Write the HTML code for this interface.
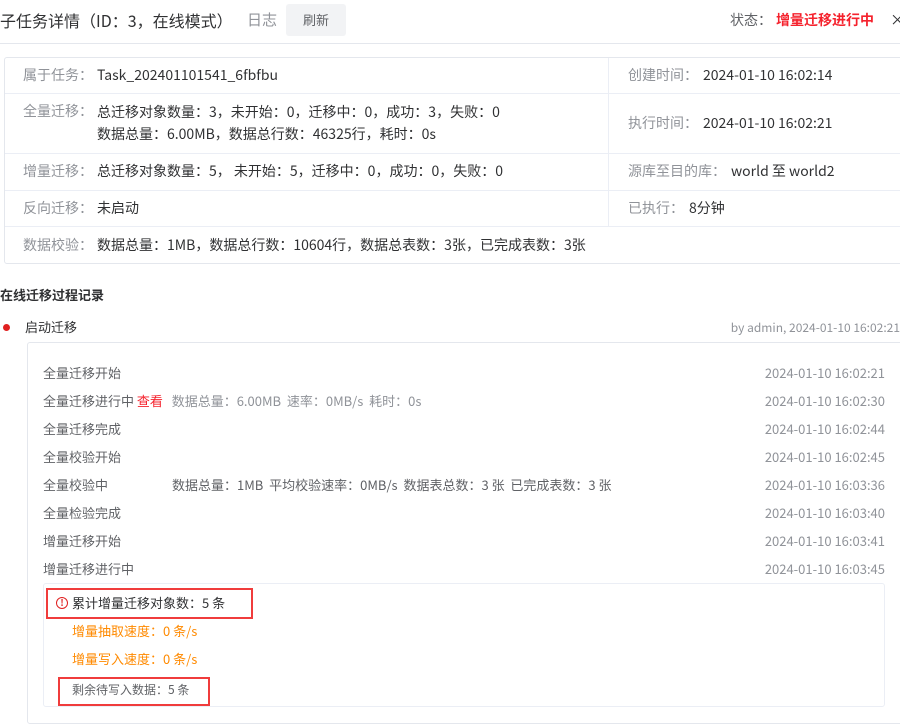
<!DOCTYPE html>
<html><head><meta charset="utf-8"><style>
*{margin:0;padding:0;box-sizing:border-box}
body{width:900px;height:725px;overflow:hidden;background:#fff;font-family:"Noto Sans CJK SC","Liberation Sans",sans-serif;color:#303133;position:relative}
.a{position:absolute;white-space:nowrap;line-height:20px}
.g{color:#909399}
.l{font-size:14px}
.hl{position:absolute;height:1px;background:#ebeef5}
.s{font-size:13px;color:#606266}
.d{font-size:13px;color:#909399;right:15px}
.o{color:#ff8a00;font-size:13px}
</style></head><body>
<div class="a" style="left:0;top:9px;font-size:16px;line-height:22px;color:#303133">子任务详情（ID：3，在线模式）</div>
<div class="a g" style="left:247px;top:10px;font-size:15px">日志</div>
<div class="a" style="left:286px;top:4px;width:60px;height:32px;background:#f2f3f5;border-radius:3px;font-size:13px;line-height:32px;text-align:center;color:#606266">刷新</div>
<div class="a" style="left:730px;top:10px;font-size:14px;color:#606266">状态：</div>
<div class="a" style="left:776px;top:10px;font-size:14px;color:#f5222d;font-weight:bold">增量迁移进行中</div>
<div class="a" style="left:890px;top:10px;font-size:15px;color:#303133">×</div>
<div class="hl" style="left:0;top:43px;width:900px;background:#e4e7ed"></div>

<div class="a" style="left:4px;top:57px;width:900px;height:207px;border:1px solid #e4e7ed;border-radius:3px"></div>
<div class="hl" style="left:5px;top:93px;width:895px"></div>
<div class="hl" style="left:5px;top:153px;width:895px"></div>
<div class="hl" style="left:5px;top:190px;width:895px"></div>
<div class="hl" style="left:5px;top:226px;width:895px"></div>
<div class="a" style="left:608px;top:58px;width:1px;height:168px;background:#ebeef5"></div>

<div class="a l g" style="left:23px;top:65px">属于任务：</div>
<div class="a l" style="left:97px;top:65px">Task_202401101541_6fbfbu</div>
<div class="a l g" style="left:23px;top:101px">全量迁移：</div>
<div class="a l" style="left:97px;top:101px;line-height:22px">总迁移对象数量：3，未开始：0，迁移中：0，成功：3，失败：0<br>数据总量：6.00MB，数据总行数：46325行，耗时：0s</div>
<div class="a l g" style="left:23px;top:161px">增量迁移：</div>
<div class="a l" style="left:97px;top:161px">总迁移对象数量：5， 未开始：5，迁移中：0，成功：0，失败：0</div>
<div class="a l g" style="left:23px;top:198px">反向迁移：</div>
<div class="a l" style="left:97px;top:198px">未启动</div>
<div class="a l g" style="left:23px;top:235px">数据校验：</div>
<div class="a l" style="left:97px;top:235px">数据总量：1MB，数据总行数：10604行，数据总表数：3张，已完成表数：3张</div>
<div class="a l g" style="left:628px;top:65px">创建时间：</div>
<div class="a l" style="left:703px;top:65px">2024-01-10 16:02:14</div>
<div class="a l g" style="left:628px;top:113px">执行时间：</div>
<div class="a l" style="left:703px;top:113px">2024-01-10 16:02:21</div>
<div class="a l g" style="left:628px;top:161px">源库至目的库：</div>
<div class="a l" style="left:731px;top:161px">world 至 world2</div>
<div class="a l g" style="left:628px;top:198px">已执行：</div>
<div class="a l" style="left:689px;top:198px">8分钟</div>

<div class="a" style="left:0;top:285px;font-size:13px;font-weight:bold">在线迁移过程记录</div>
<div class="a" style="left:3px;top:324px;width:7px;height:7px;border-radius:50%;background:#e02020"></div>
<div class="a" style="left:25px;top:317px;font-size:13px;color:#303133">启动迁移</div>
<div class="a" style="right:0;top:318px;font-size:12px;color:#909399">by admin, 2024-01-10 16:02:21</div>
<div class="a" style="left:27px;top:342px;width:880px;height:382px;border:1px solid #e4e7ed;border-radius:3px"></div>

<div class="a s" style="left:43px;top:363px">全量迁移开始</div><div class="a d" style="top:363px">2024-01-10 16:02:21</div>
<div class="a s" style="left:43px;top:391px">全量迁移进行中 <span style="color:#f5222d">查看</span> &nbsp; <span class="g">数据总量：6.00MB &nbsp;速率：0MB/s &nbsp;耗时：0s</span></div><div class="a d" style="top:391px">2024-01-10 16:02:30</div>
<div class="a s" style="left:43px;top:419px">全量迁移完成</div><div class="a d" style="top:419px">2024-01-10 16:02:44</div>
<div class="a s" style="left:43px;top:447px">全量校验开始</div><div class="a d" style="top:447px">2024-01-10 16:02:45</div>
<div class="a s" style="left:43px;top:475px">全量校验中</div><div class="a s g" style="left:172px;top:475px">数据总量：1MB &nbsp;平均校验速率：0MB/s &nbsp;数据表总数：3 张 &nbsp;已完成表数：3 张</div><div class="a d" style="top:475px">2024-01-10 16:03:36</div>
<div class="a s" style="left:43px;top:503px">全量检验完成</div><div class="a d" style="top:503px">2024-01-10 16:03:40</div>
<div class="a s" style="left:43px;top:531px">增量迁移开始</div><div class="a d" style="top:531px">2024-01-10 16:03:41</div>
<div class="a s" style="left:43px;top:559px">增量迁移进行中</div><div class="a d" style="top:559px">2024-01-10 16:03:45</div>

<div class="a" style="left:43px;top:583px;width:842px;height:124px;border:1px solid #ebeef5;border-radius:3px"></div>
<div class="a" style="left:46px;top:588px;width:207px;height:31px;border:2px solid #f03c3c"></div>
<div class="a" style="left:56px;top:597px;width:12px;height:12px;border:1.2px solid #e02020;border-radius:50%;color:#e02020;font-size:9px;line-height:10px;text-align:center;font-weight:bold">!</div>
<div class="a" style="left:72px;top:593px;font-size:13px;color:#303133">累计增量迁移对象数：5 条</div>
<div class="a o" style="left:72px;top:621px">增量抽取速度：0 条/s</div>
<div class="a o" style="left:72px;top:649px">增量写入速度：0 条/s</div>
<div class="a" style="left:58px;top:677px;width:152px;height:29px;border:2px solid #f03c3c"></div>
<div class="a" style="left:72px;top:680px;font-size:12px;color:#606266">剩余待写入数据：5 条</div>
</body></html>
